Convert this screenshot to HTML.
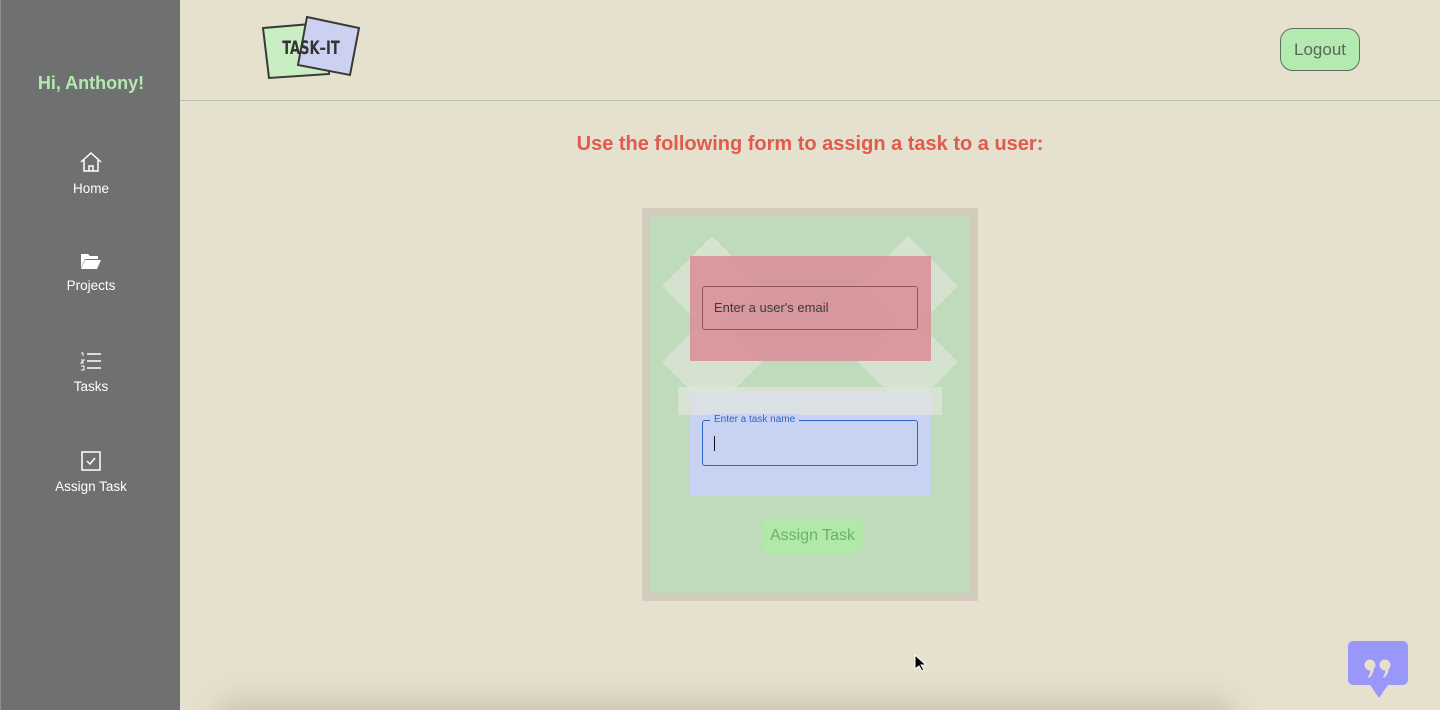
<!DOCTYPE html>
<html><head><meta charset="utf-8"><style>
*{box-sizing:border-box;margin:0;padding:0}
html{width:1440px;height:710px;overflow:hidden}
body{width:1440px;height:710px;overflow:hidden;background:#e6e0cf;font-family:"Liberation Sans",sans-serif;position:relative}
.side{position:absolute;left:0;top:0;width:180px;height:710px;background:#6e7170;border-left:1px solid #8a8d8b}
.hi{position:absolute;top:73px;width:180px;text-align:center;color:#b4eab0;font-size:18px;font-weight:bold}
.nav{position:absolute;width:180px;text-align:center;color:#fff;font-size:13.5px}
.nav svg{display:block;margin:0 auto 8px}
.top{position:absolute;left:180px;top:0;right:0;height:101px;border-bottom:1px solid #b9c2ae}
.logout{position:absolute;left:1280px;top:28px;width:80px;height:43px;border:1px solid #5f6f5c;border-radius:13px;background:#b3eab0;color:#5c665b;font-size:17px;text-align:center;line-height:41px}
h1{position:absolute;left:180px;right:0;top:133px;text-align:center;color:#e25a4c;font-size:20px;font-weight:bold}
.card{position:absolute;left:642px;top:208px;width:336px;height:393px;background:#d3cbbb}
.inner{position:absolute;left:8px;top:8px;width:320px;height:377px;background:#c0dbbc}
</style></head><body>
<div class="side">
<div class="hi">Hi, Anthony!</div>
<div class="nav" style="top:151px"><svg width="24" height="22" viewBox="0 0 24 22" fill="none" stroke="#fff" stroke-width="1.5"><path d="M2 11L12 2l10 9M5 9v11h14V9M10 20v-5h4v5"/></svg>Home</div>
<div class="nav" style="top:252px"><svg width="22" height="18" viewBox="0 0 22 18" fill="#fff"><path d="M1 2h7l2 2h8v3H5L1 16z"/><path d="M5 8h16l-4 9H1z"/></svg>Projects</div>
<div class="nav" style="top:351px"><svg width="22" height="20" viewBox="0 0 22 20" fill="none" stroke="#fff" stroke-width="1.5"><path d="M7 3h14M7 10h14M7 17h14"/><path d="M1 2h2v3M1 9h3l-3 3h3M1 15h3v4H1" stroke-width="1"/></svg>Tasks</div>
<div class="nav" style="top:451px"><svg width="20" height="20" viewBox="0 0 20 20" fill="none" stroke="#fff" stroke-width="1.5"><rect x="1" y="1" width="18" height="18"/><path d="M6 10l3 3 5-6"/></svg>Assign Task</div>
</div>
<div class="top"></div>
<svg style="position:absolute;left:260px;top:14px" width="104" height="66" viewBox="0 0 104 66">
<polygon points="3,14 63,9 69,60 9,64" fill="#c9eec4" stroke="#3a3a33" stroke-width="2"/>
<polygon points="47,3 99,14 90,61 38,51" fill="#cdd1f1" stroke="#3a3a33" stroke-width="2"/>
<text x="0" y="0" text-anchor="middle" font-family="DejaVu Sans Condensed, Liberation Sans" font-weight="bold" font-size="17" fill="#333" transform="translate(51,40) scale(0.85,1.1)">TASK–IT</text>
</svg>
<div class="logout">Logout</div>
<h1>Use the following form to assign a task to a user:</h1>
<div class="card"><div class="inner"></div></div>
<svg style="position:absolute;left:650px;top:216px" width="320" height="377">
<g fill="#e2e8dc" opacity=".6">
<polygon points="62,20 112,70 62,120 12,70"/><polygon points="62,96 112,146 62,196 12,146"/>
<polygon points="258,20 308,70 258,120 208,70"/><polygon points="258,96 308,146 258,196 208,146"/>
</g>
<rect x="40" y="40" width="241" height="105" fill="#d98c96" opacity=".85"/>
<rect x="40" y="176" width="241" height="104" fill="#c8d3f3"/>
<rect x="28" y="171" width="264" height="28" fill="#e3e6dc" opacity=".65"/>
</svg>
<div style="position:absolute;left:702px;top:286px;width:216px;height:44px;border:1px solid #8e5a60;border-radius:3px;font-size:13px;color:#3f3a3a;padding:13px 11px">Enter a user's email</div>
<div style="position:absolute;left:702px;top:420px;width:216px;height:46px;border:1.5px solid #2f63c4;border-radius:3px"></div>
<div style="position:absolute;left:710px;top:414px;padding:0 4px;background:#c8d3f3;font-size:10px;color:#2f63c4">Enter a task name</div>
<div style="position:absolute;left:714px;top:436px;width:1px;height:15px;background:#111"></div>
<div style="position:absolute;left:762px;top:519px;width:101px;height:34px;border-radius:8px;background:#b1eaa8;color:#6ab36b;font-size:16px;text-align:center;line-height:34px">Assign Task</div>
<div style="position:absolute;left:0;top:0;width:1440px;height:710px;overflow:hidden;pointer-events:none">
<div style="position:absolute;left:215px;top:700px;width:1020px;height:40px;border-radius:30px;background:#c9c3b0;filter:blur(14px)"></div>
</div>
<svg style="position:absolute;left:914px;top:654px" width="12" height="18"><path d="M1 1v14l4-3 3 5 2-1-3-5h5z" fill="#000" stroke="#fff" stroke-width="1"/></svg>
<svg style="position:absolute;left:1348px;top:641px" width="61" height="58"><rect width="60" height="44" rx="5" fill="#9a97fb"/><path d="M22 44l9 13 9-13z" fill="#9a97fb"/>
<g fill="#e6e0cf"><circle cx="22" cy="24" r="5.5"/><path d="M26 25q0 8-5 12l-1-1q3-4 2-9z"/><circle cx="37" cy="24" r="5.5"/><path d="M41 25q0 8-5 12l-1-1q3-4 2-9z"/></g></svg>
</body></html>
